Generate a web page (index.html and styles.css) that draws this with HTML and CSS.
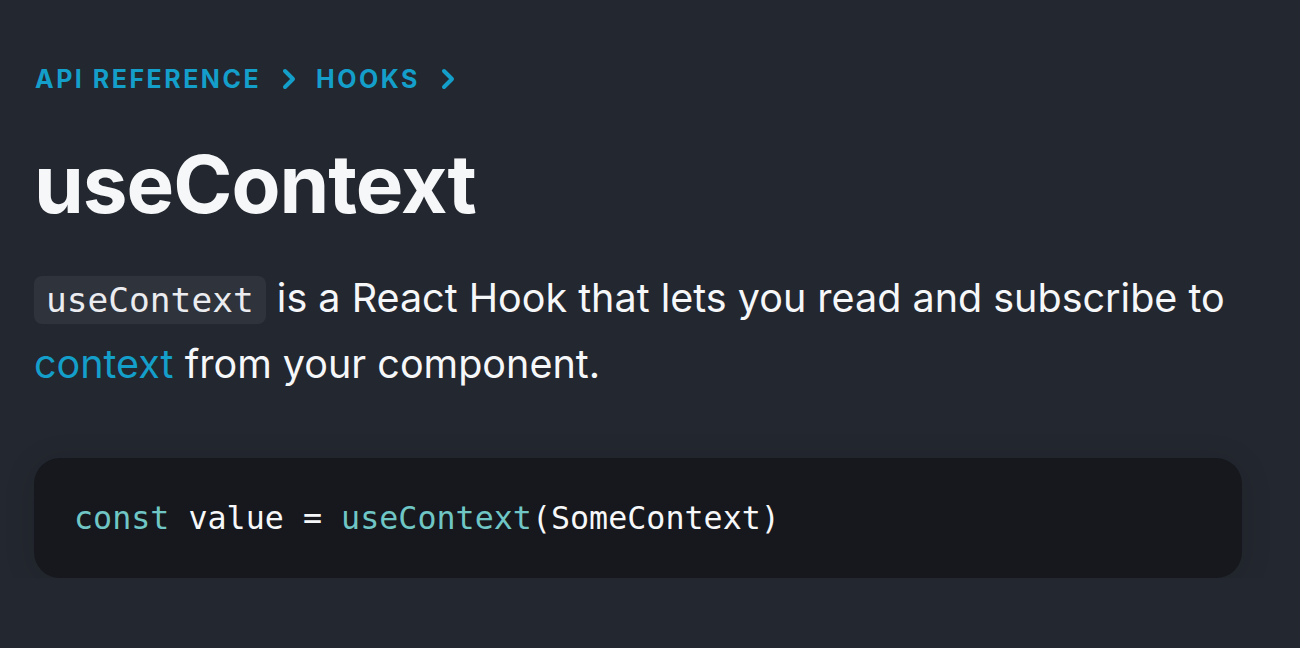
FILE: index.html
```html
<!DOCTYPE html>
<html lang="en">
<head>
<meta charset="utf-8">
<link rel="stylesheet" href="styles.css">
</head>
<body>
<main class="page">
  <nav class="crumbs">
    <a class="crumb">API Reference</a>
    <svg class="chev" viewBox="0 0 16 24" width="16" height="24"><path d="M4 4 L12 12 L4 20" fill="none" stroke="currentColor" stroke-width="4" stroke-linecap="round" stroke-linejoin="round"/></svg>
    <a class="crumb">Hooks</a>
    <svg class="chev" viewBox="0 0 16 24" width="16" height="24"><path d="M4 4 L12 12 L4 20" fill="none" stroke="currentColor" stroke-width="4" stroke-linecap="round" stroke-linejoin="round"/></svg>
  </nav>
  <h1 class="title">useContext</h1>
  <p class="intro"><code class="inline-code">useContext</code> is a React Hook that lets you read and subscribe to <a class="link">context</a> from your component.</p>
  <pre class="code-block"><code><span class="kw">const</span> value = <span class="fn">useContext</span>(SomeContext)</code></pre>
</main>
</body>
</html>
```
FILE: styles.css
```css
html, body {
  margin: 0;
  padding: 0;
  background: #23272f;
}
body {
  font-family: Inter, "Noto Sans", sans-serif;
  color: #f6f7f9;
}
.page {
  padding: 60px 58px 0 34px;
}
.crumbs {
  display: flex;
  align-items: center;
  height: 38px;
  color: #149eca;
}
.crumb {
  font-size: 25px;
  font-weight: 700;
  text-transform: uppercase;
  letter-spacing: 2.5px;
  padding-left: 1px;
}
.chev {
  display: block;
  margin: 0 18px 0 20px;
}
.title {
  margin: 38px 0 0 0;
  font-size: 80px;
  line-height: 96px;
  font-weight: 700;
  letter-spacing: -1px;
  color: #f6f7f9;
}
.intro {
  margin: 34px 0 0 0;
  font-size: 39.5px;
  line-height: 64px;
  font-weight: 400;
  color: #f6f7f9;
}
.inline-code {
  font-family: "DejaVu Sans Mono", monospace;
  font-size: 34.5px;
  background: #2f333b;
  border-radius: 8px;
  padding: 4px 12px;
  color: #ebecf0;
}
.link {
  color: #149eca;
}
.code-block {
  margin: 62px 0 0 0;
  background: #16181d;
  border-radius: 26px;
  height: 120px;
  box-sizing: border-box;
  padding: 0 40px;
  display: flex;
  align-items: center;
  font-family: "DejaVu Sans Mono", monospace;
  font-size: 31.7px;
  line-height: 48px;
  color: #f6f7f9;
  box-shadow: 0 4px 32px rgba(0, 0, 0, 0.12);
}
.kw, .fn {
  color: #6fc6c5;
}
```
